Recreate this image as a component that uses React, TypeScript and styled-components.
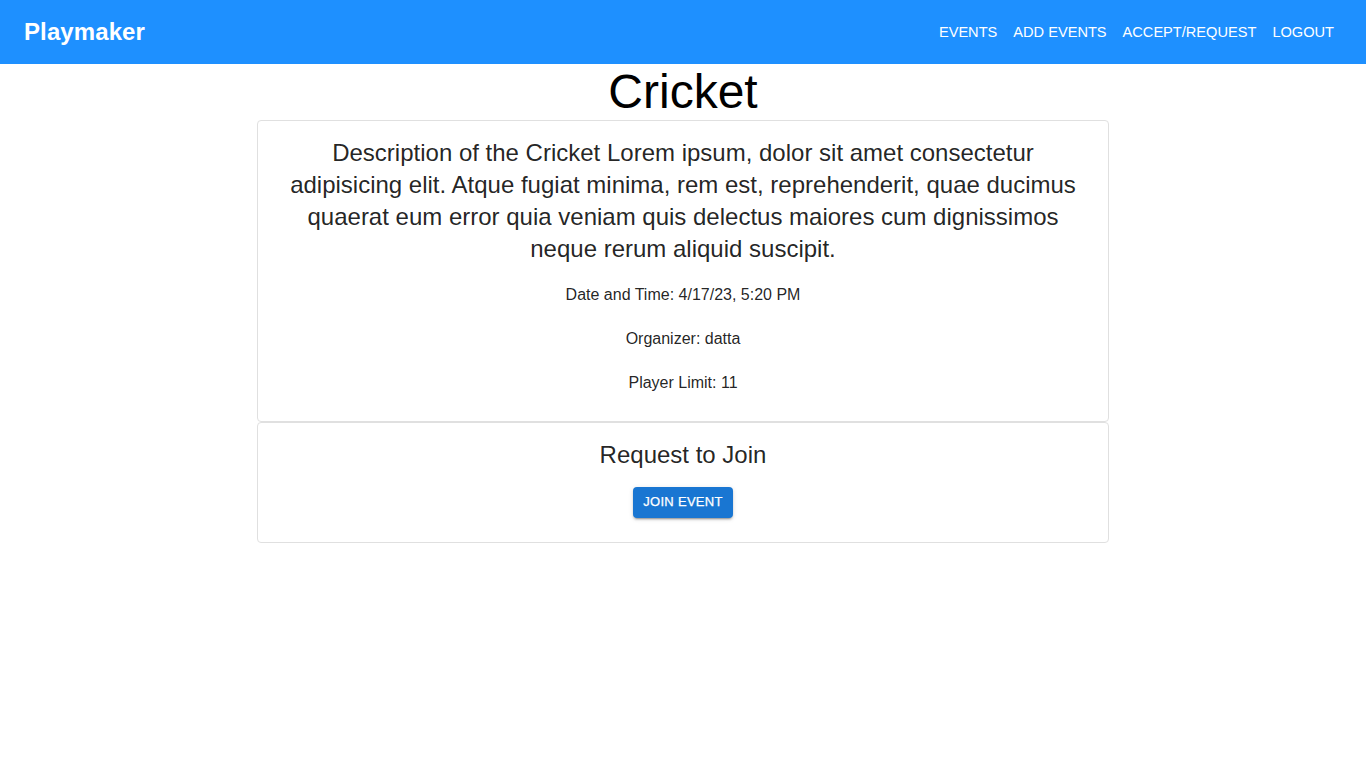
import React from "react";
import styled, { createGlobalStyle } from "styled-components";

const Global = createGlobalStyle`
  html, body { margin: 0; padding: 0; background: #fff; }
  body { font-family: "Liberation Sans", Arial, sans-serif; }
  * { box-sizing: border-box; }
`;

const NavBar = styled.header`
  height: 64px;
  background: #1e90ff;
  display: flex;
  align-items: center;
  justify-content: space-between;
  padding: 0 24px 0 24px;
  color: #fff;
`;

const Logo = styled.div`
  font-size: 24px;
  font-weight: 700;
  letter-spacing: 0.1px;
`;

const NavLinks = styled.nav`
  display: flex;
  align-items: center;
  gap: 16px;
  padding-right: 8px;
`;

const NavLink = styled.a`
  color: #fff;
  text-decoration: none;
  font-size: 14.6px;
  text-transform: uppercase;
  line-height: 24px;
`;

const Main = styled.main`
  display: flex;
  flex-direction: column;
  align-items: center;
`;

const Title = styled.h1`
  margin: 0 0 1px;
  font-size: 48px;
  font-weight: 400;
  line-height: 55px;
  color: #000;
`;

const Card = styled.section<{ $pb: number }>`
  width: 852px;
  border: 1px solid #e0e0e0;
  border-radius: 4px;
  padding: 16px 16px ${(p) => p.$pb}px;
  display: flex;
  flex-direction: column;
  align-items: center;
  text-align: center;
  color: rgba(0, 0, 0, 0.87);
`;

const Description = styled.p`
  margin: 0 0 18px;
  font-size: 24px;
  line-height: 32px;
`;

const InfoList = styled.div`
  display: flex;
  flex-direction: column;
  gap: 20px;
`;

const Info = styled.p`
  margin: 0;
  font-size: 16px;
  line-height: 24px;
`;

const SubTitle = styled.h2`
  margin: 0 0 16px;
  font-size: 24px;
  font-weight: 400;
  line-height: 32px;
`;

const JoinButton = styled.button`
  background: #1976d2;
  color: #fff;
  border: none;
  border-radius: 4px;
  padding: 3px 10px 5px;
  height: 31px;
  width: 100px;
  font-family: "Liberation Sans", Arial, sans-serif;
  font-size: 13px;
  font-weight: 500;
  letter-spacing: 0.3px;
  text-transform: uppercase;
  cursor: pointer;
  -webkit-text-stroke: 0.25px #fff;
  box-shadow: 0px 3px 1px -2px rgba(0, 0, 0, 0.2),
    0px 2px 2px 0px rgba(0, 0, 0, 0.14), 0px 1px 5px 0px rgba(0, 0, 0, 0.12);
`;

export default function App() {
  return (
    <>
      <Global />
      <NavBar>
        <Logo>Playmaker</Logo>
        <NavLinks>
          <NavLink href="#">Events</NavLink>
          <NavLink href="#">Add Events</NavLink>
          <NavLink href="#">Accept/Request</NavLink>
          <NavLink href="#">Logout</NavLink>
        </NavLinks>
      </NavBar>
      <Main>
        <Title>Cricket</Title>
        <Card $pb={26}>
          <Description>
            Description of the Cricket Lorem ipsum, dolor sit amet consectetur
            adipisicing elit. Atque fugiat minima, rem est, reprehenderit, quae
            ducimus quaerat eum error quia veniam quis delectus maiores cum
            dignissimos neque rerum aliquid suscipit.
          </Description>
          <InfoList>
            <Info>Date and Time: 4/17/23, 5:20 PM</Info>
            <Info>Organizer: datta</Info>
            <Info>Player Limit: 11</Info>
          </InfoList>
        </Card>
        <Card $pb={24}>
          <SubTitle>Request to Join</SubTitle>
          <JoinButton>Join Event</JoinButton>
        </Card>
      </Main>
    </>
  );
}
